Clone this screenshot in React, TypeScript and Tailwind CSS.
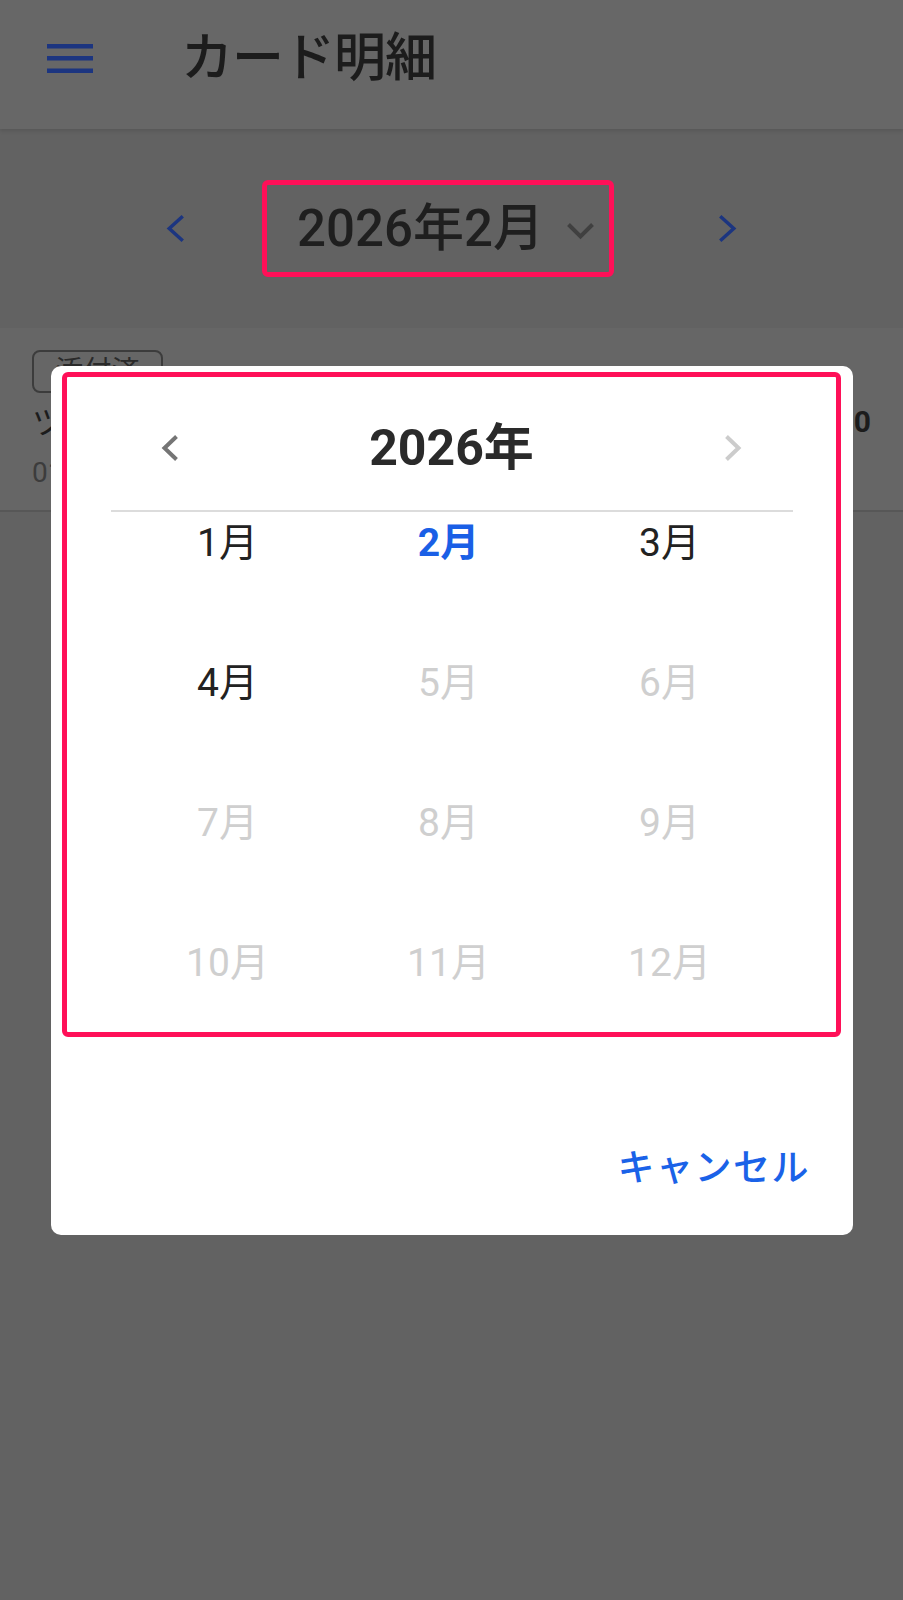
import React, { useState } from 'react';

const months = Array.from({ length: 12 }, (_, i) => i + 1);

const Chevron: React.FC<{ dir: 'left' | 'right' | 'down'; className?: string; w: number; h: number; sw?: number }> = ({
  dir,
  className,
  w,
  h,
  sw = 4,
}) => {
  const p = sw / 2 + 0.5;
  const points =
    dir === 'left'
      ? `${w - p},${p} ${p + 1},${h / 2} ${w - p},${h - p}`
      : dir === 'right'
      ? `${p},${p} ${w - p - 1},${h / 2} ${p},${h - p}`
      : `${p},${p} ${w / 2},${h - p - 1} ${w - p},${p}`;
  return (
    <svg width={w} height={h} viewBox={`0 0 ${w} ${h}`} className={className} fill="none">
      <polyline points={points} stroke="currentColor" strokeWidth={sw} strokeLinecap="butt" strokeLinejoin="miter" />
    </svg>
  );
};

export default function App() {
  const [selected] = useState(2);
  const enabledUntil = 4;

  return (
    <div className="relative w-[903px] h-[1600px] overflow-hidden bg-[#626262] font-['Roboto','Noto_Sans_CJK_JP',sans-serif]">
      {/* Header */}
      <header className="relative z-10 h-[129px] bg-[#676767] flex items-center pb-[12px] shadow-[0_2px_4px_rgba(0,0,0,0.12)]">
        <svg width="46" height="30" viewBox="0 0 46 30" className="ml-[47px] text-[#1c3580]">
          <rect x="0" y="0" width="46" height="4.5" fill="currentColor" />
          <rect x="0" y="12" width="46" height="4.5" fill="currentColor" />
          <rect x="0" y="24.5" width="46" height="4.5" fill="currentColor" />
        </svg>
        <h1 className="ml-[88px] text-[52px] leading-none font-medium text-[#1c1c1c] tracking-[-1px]">カード明細</h1>
      </header>

      {/* Month selector */}
      <div className="h-[199px] bg-[#626262] flex items-center pl-[166px]">
        <Chevron dir="left" w={19} h={29} sw={3.5} className="text-[#1c3580]" />
        <div className="ml-[77px] w-[352px] h-[97px] border-[5px] border-[#ff1058] rounded-[6px] flex items-center pl-[30px]">
          <span className="text-[51px] leading-none font-medium text-[#1f1f1f]">2026年2月</span>
          <Chevron dir="down" w={29} h={18} sw={4} className="ml-[22px] mt-[4px] text-[#404040]" />
        </div>
        <Chevron dir="right" w={19} h={29} sw={3.5} className="ml-[104px] text-[#1c3580]" />
      </div>

      {/* Statement row */}
      <div className="relative h-[184px] bg-[#666666] border-b-2 border-[#575757] px-[32px] pt-[22px]">
        <div className="w-[131px] h-[43px] border-2 border-[#3c3c3c] rounded-[8px] flex items-center justify-center">
          <span className="text-[28px] leading-none text-[#2a2a2a]">添付済</span>
        </div>
        <div className="mt-[14px] flex items-start justify-between">
          <div>
            <p className="text-[32px] leading-none text-[#1c1c1c]">ツルハドラッグ</p>
            <p className="mt-[20px] text-[28px] leading-none text-[#3c3c3c]">01/15</p>
          </div>
          <p className="text-[30px] leading-none font-bold text-[#1c1c1c]">¥1,280</p>
        </div>
      </div>

      {/* Dialog */}
      <div className="absolute left-[51px] top-[366px] w-[802px] h-[869px] bg-white rounded-[10px] pt-[6px] flex flex-col">
        <div className="ml-[11px] mr-[12px] h-[665px] border-[5px] border-[#ff1058] rounded-[6px] overflow-hidden">
          <div className="h-[133px] pt-[9px] px-[94px] flex items-center justify-between">
            <Chevron dir="left" w={18} h={28} sw={4} className="text-[#757575]" />
            <span className="text-[50px] leading-none font-bold text-[#2a2a2a]">2026年</span>
            <Chevron dir="right" w={18} h={28} sw={4} className="text-[#cccccc]" />
          </div>
          <div className="ml-[44px] mr-[43px] h-[2px] bg-[#dcdcdc]" />
          <div className="ml-[50px] w-[663px] grid grid-cols-3">
            {months.map((m) => {
              const isSelected = m === selected;
              const enabled = m <= enabledUntil;
              return (
                <div key={m} className="h-[140px] pt-[12px] flex justify-center">
                  <span
                    className={
                      isSelected
                        ? 'text-[39px] leading-none font-bold text-[#1a5fe6]'
                        : enabled
                        ? 'text-[39px] leading-none text-[#222222]'
                        : 'text-[39px] leading-none text-[#cfcfcf]'
                    }
                  >
                    {m}月
                  </span>
                </div>
              );
            })}
          </div>
        </div>
        <div className="flex-1 flex justify-end pt-[112px] pr-[43px]">
          <button className="h-[38px] text-[37px] leading-none font-medium text-[#1a62e8] tracking-[1.5px]">キャンセル</button>
        </div>
      </div>
    </div>
  );
}
